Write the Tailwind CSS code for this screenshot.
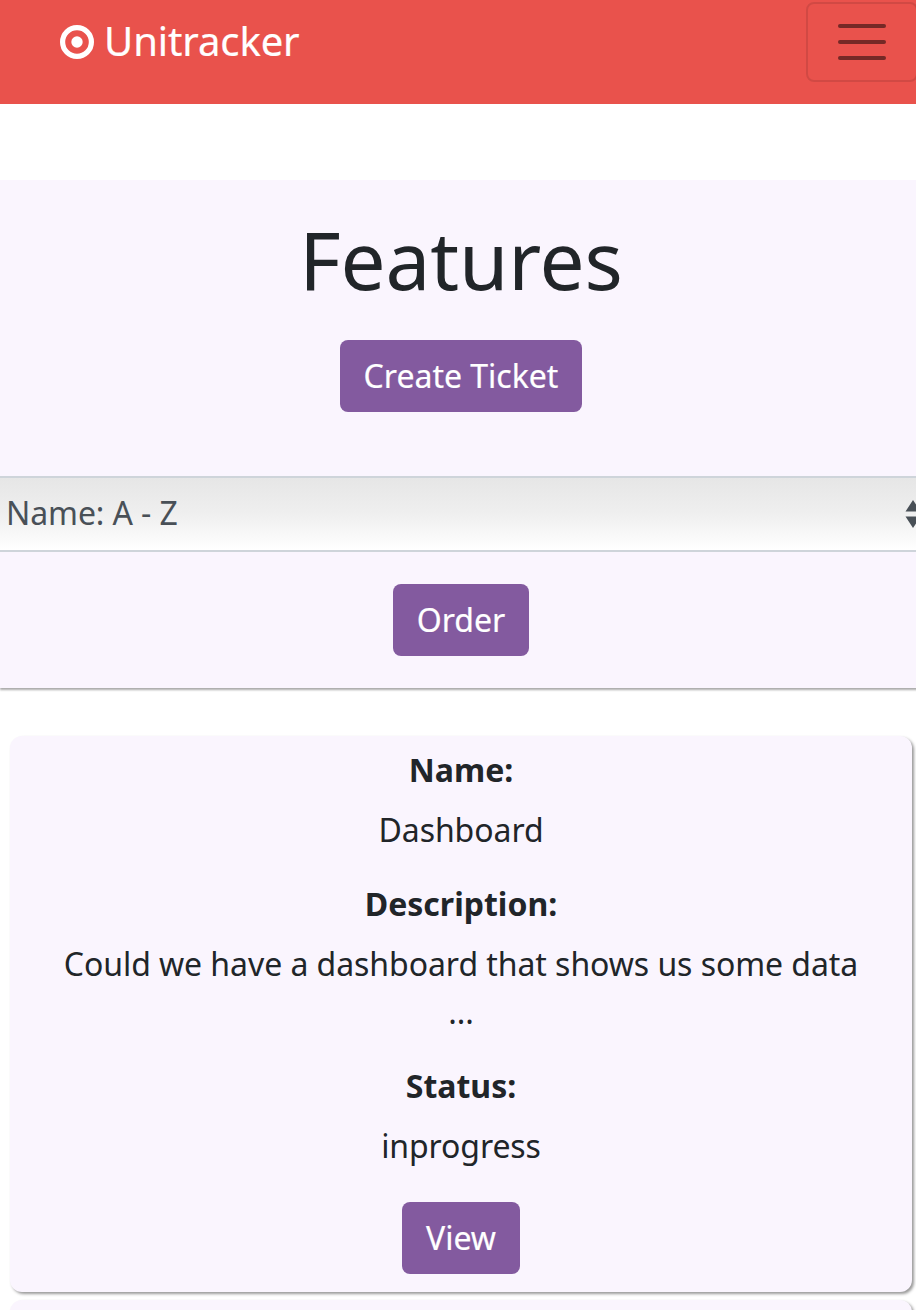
<!DOCTYPE html>
<html lang="en">
<head>
<meta charset="utf-8">
<title>Unitracker</title>
<script src="https://cdn.jsdelivr.net/npm/@tailwindcss/browser@4"></script>
</head>
<body class="h-[1310px] overflow-hidden bg-white font-['Noto_Sans',sans-serif] text-[32px] leading-[48px] text-[#212529]">
<div class="h-[1310px] w-[922px] overflow-hidden">
  <header class="flex h-[104px] items-start justify-between bg-[#e9524c] pl-[60px]">
    <a class="flex h-[84px] items-center gap-[10px] text-[40px] text-white">
      <svg class="size-[34px]" viewBox="0 0 34 34" fill="none"><circle cx="17" cy="17" r="14.4" stroke="white" stroke-width="5.2"/><circle cx="17" cy="17" r="5.7" fill="white"/></svg>
      <span class="pb-[2px] tracking-[-0.1px] [-webkit-text-stroke:0.2px_white]">Unitracker</span>
    </a>
    <button class="mt-[2px] mr-[4px] flex h-[80px] w-[112px] shrink-0 flex-col items-center justify-center gap-[12px] rounded-[8px] border-2 border-black/10">
      <span class="h-[4px] w-[48px] rounded-full bg-[#752926]"></span>
      <span class="h-[4px] w-[48px] rounded-full bg-[#752926]"></span>
      <span class="h-[4px] w-[48px] rounded-full bg-[#752926]"></span>
    </button>
  </header>
  <section class="mt-[76px] flex h-[508px] flex-col items-center bg-[#faf5fe] pt-[31px] shadow-[0_2px_2px_#aaa]">
    <h1 class="h-[96px] text-[80px] leading-[96px] tracking-[-0.15px]">Features</h1>
    <button class="mt-[33px] h-[72px] rounded-[8px] bg-[#835a9f] px-[24px] text-white [-webkit-text-stroke:0.2px_white]">Create Ticket</button>
    <div class="mt-[64px] flex h-[76px] w-full items-center justify-between border-y-2 border-[#ced4da] bg-linear-to-b from-[#e6e6e6] via-[#efefef] to-white pl-[6px] text-[#495057]">
      <span class="pb-[2px] tracking-[-0.1px]">Name: A - Z</span>
      <svg class="h-[30px] w-[17px]" viewBox="0 0 17 30" fill="#495057"><path d="M8 1 15.500 12.500H.5zM.5 17.500H15.500L8 29z"/></svg>
    </div>
    <button class="mt-[32px] h-[72px] rounded-[8px] bg-[#835a9f] px-[24px] text-white [-webkit-text-stroke:0.2px_white]">Order</button>
  </section>
  <article class="mx-[10px] mt-[48px] flex h-[556px] flex-col items-center rounded-[12px] bg-[#faf5fe] pt-[10px] text-center shadow-[2px_2px_3px_#999]">
    <h2 class="font-bold">Name:</h2>
    <p class="mt-[12px] tracking-[-0.06px]">Dashboard</p>
    <h2 class="mt-[26px] font-bold">Description:</h2>
    <p class="mt-[12px] tracking-[-0.06px]">Could we have a dashboard that shows us some data<br>...</p>
    <h2 class="mt-[26px] font-bold">Status:</h2>
    <p class="mt-[12px] tracking-[-0.1px]">inprogress</p>
    <button class="mt-[32px] h-[72px] rounded-[8px] bg-[#835a9f] px-[24px] text-white [-webkit-text-stroke:0.2px_white]">View</button>
  </article>
  <article class="mx-[10px] mt-[8px] h-[556px] rounded-[12px] bg-[#faf5fe] shadow-[2px_2px_3px_#999]"></article>
</div>
</body>
</html>
